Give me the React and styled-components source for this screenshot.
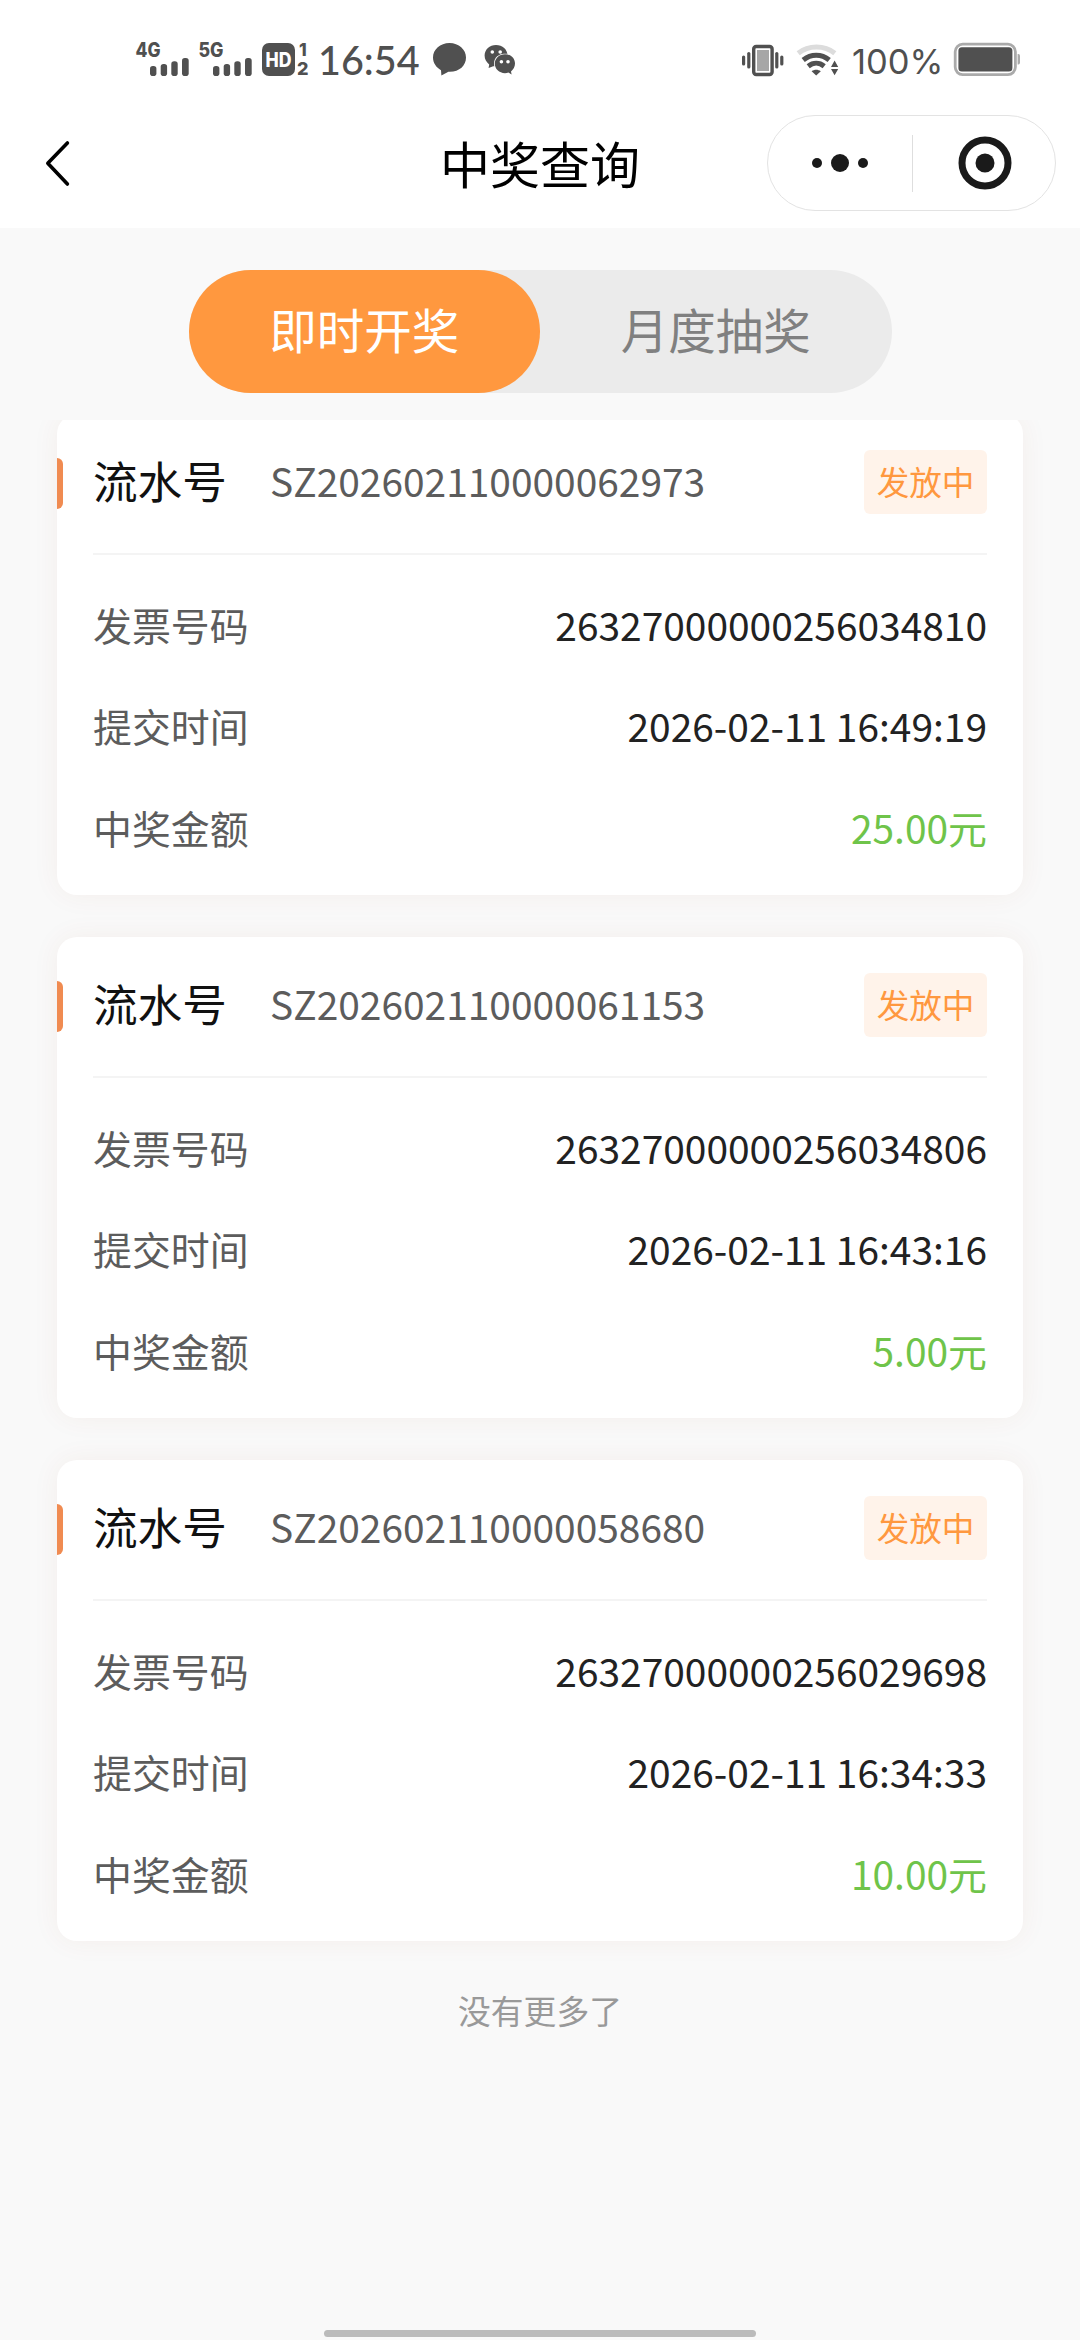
import React, { useState } from "react";
import styled, { createGlobalStyle } from "styled-components";

const records = [
    {
        serial: 'SZ202602110000062973',
        status: '发放中',
        invoice: '26327000000256034810',
        time: '2026-02-11 16:49:19',
        amount: '25.00元',
    },
    {
        serial: 'SZ202602110000061153',
        status: '发放中',
        invoice: '26327000000256034806',
        time: '2026-02-11 16:43:16',
        amount: '5.00元',
    },
    {
        serial: 'SZ202602110000058680',
        status: '发放中',
        invoice: '26327000000256029698',
        time: '2026-02-11 16:34:33',
        amount: '10.00元',
    },
];

const tabs = ['即时开奖', '月度抽奖'];

const GlobalStyle = createGlobalStyle`
	* {
		box-sizing: border-box;
	}

	body {
		margin: 0;
		background: #f9f9f9;
		font-family: "Noto Sans CJK SC", sans-serif;
	}
`;

const Page = styled.div`
	display: flex;
	flex-direction: column;
	width: 1080px;
	height: 2340px;
	overflow: hidden;
	background: #f9f9f9;
`;

const Header = styled.header`
	flex: none;
	height: 228px;
	background: #fff;
`;

const StatusBar = styled.div`
	display: flex;
	justify-content: space-between;
	height: 98px;
	padding: 30px 56px 0 130px;
	color: #505050;
`;

const StatusGroup = styled.div`
	display: flex;
	height: 60px;

	svg {
		display: block;
		flex: none;
	}
`;

const Clock = styled.span`
	width: 106px;
	padding-left: 1px;
	font: 500 39.5px/59px Lato, sans-serif;
	white-space: nowrap;
`;

const BatteryText = styled.span`
	width: 99px;
	padding-left: 1px;
	font: 400 34.5px/64px Inter, sans-serif;
	white-space: nowrap;
`;

const NavBar = styled.nav`
	display: grid;
	grid-template-columns: 1fr auto 1fr;
	align-items: center;
	height: 130px;
	padding: 0 24px 0 40px;
`;

const BackButton = styled.button`
	justify-self: start;
	width: 40px;
	height: 60px;
	padding: 0;
	border: 0;
	background: none;

	svg {
		display: block;
	}
`;

const Title = styled.h1`
	margin: -3px 0 0 -16px;
	font-size: 50px;
	font-weight: 400;
	line-height: 72px;
	color: #000;
`;

const Capsule = styled.div`
	display: flex;
	justify-self: end;
	align-items: center;
	width: 289px;
	height: 96px;
	border: 1px solid #e3e3e3;
	border-radius: 48px;
`;

const CapsuleItem = styled.div`
	display: flex;
	flex: none;
	align-items: center;
	justify-content: center;
	width: 50%;
	height: 57px;

	& + & {
		padding-left: 3px;
		border-left: 1px solid #dedede;
	}
`;

const Tabs = styled.div`
	display: flex;
	flex: none;
	width: 703px;
	height: 123px;
	margin: 42px auto 27px;
	border-radius: 62px;
	background: #ebebeb;
`;

const Tab = styled.button`
	flex: 1;
	padding: 0 0 6px;
	border: 0;
	border-radius: 62px;
	background: ${props => props.$active ? '#ff983f' : 'transparent'};
	color: ${props => props.$active ? '#fff' : '#808080'};
	font-family: inherit;
	font-size: 47.5px;
	line-height: 117px;
`;

/* the list is scrolled a few pixels, so the first card is cut at the top */
const List = styled.main`
	flex: 1;
	min-height: 0;
	overflow: hidden;
	padding: 0 57px;
`;

const Scroller = styled.div`
	display: flex;
	flex-direction: column;
	gap: 42px;
	margin-top: -6px;
`;

const Card = styled.section`
	height: 481px;
	padding: 0 36px;
	border-radius: 20px;
	background: #fff;
	box-shadow: 0 0 28px rgba(160, 60, 30, 0.06);
`;

const CardHead = styled.div`
	position: relative;
	display: flex;
	align-items: center;
	height: 141px;
	padding-bottom: 3px;
	border-bottom: 2px solid #f4f4f4;

	&::before {
		content: "";
		position: absolute;
		left: -36px;
		top: 44px;
		width: 6px;
		height: 51px;
		border-radius: 0 6px 6px 0;
		background: #f08b51;
	}
`;

const SerialLabel = styled.span`
	width: 177px;
	padding-bottom: 5px;
	font-size: 44.6px;
	color: #111;
`;

const Serial = styled.span`
	flex: 1;
	padding-bottom: 5px;
	font-size: 38.9px;
	color: #5c5c5c;
`;

const Badge = styled.span`
	width: 123px;
	height: 64px;
	border-radius: 6px;
	background: #fff3ea;
	color: #ff983f;
	font-size: 32.6px;
	line-height: 61px;
	text-align: center;
`;

const Rows = styled.div`
	padding-top: 18px;
`;

const Row = styled.div`
	display: flex;
	align-items: center;
	justify-content: space-between;
	height: 101.5px;
	font-size: 38.9px;
	color: #5c5c5c;
`;

const Value = styled.span`
	color: ${props => props.$green ? '#6fc44a' : '#222'};
`;

const NoMore = styled.p`
	margin: 45px 0 0;
	font-size: 32.8px;
	line-height: 48px;
	text-align: center;
	color: #999;
`;

const HomeBar = styled.div`
	flex: none;
	width: 432px;
	height: 7px;
	margin: 0 auto 3px;
	border-radius: 4px;
	background: #bbb;
`;

const Signal = ({ name }) => (
    <svg width="63" height="60" viewBox="130 30 63 60" fill="#505050">
        <text x="135.5" y="56.5" fontFamily="Inter" fontWeight="800" fontSize="19.5" textLength="25" lengthAdjust="spacingAndGlyphs">{name}</text>
        <rect x="150" y="66" width="6.4" height="10" rx="2.8" />
        <rect x="160.7" y="64" width="6.4" height="12" rx="2.8" />
        <rect x="171.3" y="61.3" width="6.4" height="14.7" rx="2.8" />
        <rect x="182" y="58" width="6.7" height="18" rx="2.8" />
    </svg>
);

const HdIcon = () => (
    <svg width="61" height="60" viewBox="256 30 61 60" fill="#505050">
        <rect x="262" y="43" width="33" height="33" rx="7" />
        <text x="265.5" y="66.5" fill="#fff" fontFamily="Inter" fontWeight="800" fontSize="19.5" textLength="26" lengthAdjust="spacingAndGlyphs">HD</text>
        <text x="299" y="56" fontFamily="Inter" fontWeight="800" fontSize="17.5">1</text>
        <text x="297" y="75" fontFamily="Inter" fontWeight="800" fontSize="18">2</text>
    </svg>
);

const ChatIcons = () => (
    <svg width="97" height="60" viewBox="423 30 97 60" fill="#505050">
        <path d="M449.5 43C440.2 43 433 49.4 433 57.6C433 63 436.2 67.6 441 70.2L441.4 75.4L448.4 71.8C459 72.4 466 66 466 57.6C466 49.4 458.8 43 449.5 43Z" />
        <path d="M496 45C489.6 45 484.6 49.6 484.6 55.6C484.6 59.4 486.4 62.4 489.2 64.4L488.6 68L493.2 66.2C502 67.4 507.6 61.4 507.6 55.6C507.6 49.6 502.4 45 496 45Z" />
        <path d="M505 54.2C499.2 54.2 494.8 58.4 494.8 63.6C494.8 69 499.2 73.2 505 73.2C506.2 73.2 507.4 73 508.4 72.6L511.6 74.4L511 71.4C513.4 69.6 515 66.8 515 63.6C515 58.4 510.6 54.2 505 54.2Z" stroke="#fff" strokeWidth="1.6" paintOrder="stroke" />
        <circle cx="492.3" cy="52" r="1.8" fill="#fff" />
        <circle cx="500.2" cy="52" r="1.8" fill="#fff" />
        <circle cx="501.4" cy="61.8" r="1.8" fill="#fff" />
        <circle cx="508" cy="61.8" r="1.8" fill="#fff" />
    </svg>
);

const VibrateIcon = () => (
    <svg width="54" height="60" viewBox="736 30 54 60" fill="#505050">
        <rect x="753.7" y="46.5" width="18.4" height="28" rx="2.5" fill="#fff" stroke="#505050" strokeWidth="3.4" />
        <rect x="757" y="50" width="12" height="21" fill="#a6a6a6" />
        <rect x="742" y="55.5" width="3.2" height="10" rx="1.6" />
        <rect x="747.2" y="52" width="3.2" height="16.5" rx="1.6" />
        <rect x="775.2" y="52" width="3.2" height="16.5" rx="1.6" />
        <rect x="780.2" y="55.5" width="3.2" height="10" rx="1.6" />
    </svg>
);

const WifiIcon = () => (
    <svg width="61" height="60" viewBox="790 30 61 60" fill="none" stroke="#505050" strokeWidth="5">
        <path d="M798.2 53.2C808.5 45 824.5 45 834.8 53.2" stroke="#dcdcdc" />
        <path d="M803.2 60C811 53.6 821.5 53.6 829.2 60" />
        <path d="M808.2 66.2C813 62.4 819.4 62.4 824.2 66.2" />
        <path d="M811.6 71.2C814.4 69.2 818 69.2 820.8 71.2L816.2 75.6Z" fill="#505050" stroke="none" />
        <path d="M834.6 60.6L838.2 67H831ZM834.6 75.2L838.2 69H831Z" fill="#505050" stroke="none" />
    </svg>
);

const BatteryIcon = () => (
    <svg width="74" height="60" viewBox="950 30 74 60">
        <rect x="955.2" y="44.2" width="60.2" height="30.4" rx="7.5" fill="none" stroke="#aaa" strokeWidth="2.8" />
        <rect x="958.4" y="47.2" width="54" height="24.4" rx="3.5" fill="#505050" />
        <path d="M1017.6 54H1018.4Q1020 54 1020 56V62.6Q1020 64.6 1018.4 64.6H1017.6Z" fill="#aaa" />
    </svg>
);

function RecordCard({ record }) {
    return (
        <Card>
            <CardHead>
                <SerialLabel>流水号</SerialLabel>
                <Serial>{record.serial}</Serial>
                <Badge>{record.status}</Badge>
            </CardHead>
            <Rows>
                <Row>发票号码<Value>{record.invoice}</Value></Row>
                <Row>提交时间<Value>{record.time}</Value></Row>
                <Row>中奖金额<Value $green>{record.amount}</Value></Row>
            </Rows>
        </Card>
    );
}

function App() {
    const [active, setActive] = useState(0);
    return (
        <Page>
            <GlobalStyle />
            <Header>
                <StatusBar>
                    <StatusGroup>
                        <Signal name="4G" />
                        <Signal name="5G" />
                        <HdIcon />
                        <Clock>16:54</Clock>
                        <ChatIcons />
                    </StatusGroup>
                    <StatusGroup>
                        <VibrateIcon />
                        <WifiIcon />
                        <BatteryText>100%</BatteryText>
                        <BatteryIcon />
                    </StatusGroup>
                </StatusBar>
                <NavBar>
                    <BackButton aria-label="返回">
                        <svg width="40" height="60" viewBox="40 133 40 60" fill="none" stroke="#000" strokeWidth="3.6" strokeLinecap="round" strokeLinejoin="round">
                            <path d="M67.4 143L47.8 163.2L67.4 184" />
                        </svg>
                    </BackButton>
                    <Title>中奖查询</Title>
                    <Capsule>
                        <CapsuleItem>
                            <svg width="58" height="20" fill="#1a1a1a">
                                <circle cx="6" cy="10" r="5" />
                                <circle cx="29" cy="10" r="9" />
                                <circle cx="52" cy="10" r="5" />
                            </svg>
                        </CapsuleItem>
                        <CapsuleItem>
                            <svg width="54" height="54" fill="#1a1a1a">
                                <circle cx="27" cy="27" r="23" fill="none" stroke="#1a1a1a" strokeWidth="7" />
                                <circle cx="27" cy="27" r="9.5" />
                            </svg>
                        </CapsuleItem>
                    </Capsule>
                </NavBar>
            </Header>
            <Tabs>
                {tabs.map((name, i) => (
                    <Tab key={name} $active={i === active} onClick={() => setActive(i)}>{name}</Tab>
                ))}
            </Tabs>
            <List>
                <Scroller>
                    {records.map(record => <RecordCard key={record.serial} record={record} />)}
                </Scroller>
                <NoMore>没有更多了</NoMore>
            </List>
            <HomeBar />
        </Page>
    )
}

export default App
